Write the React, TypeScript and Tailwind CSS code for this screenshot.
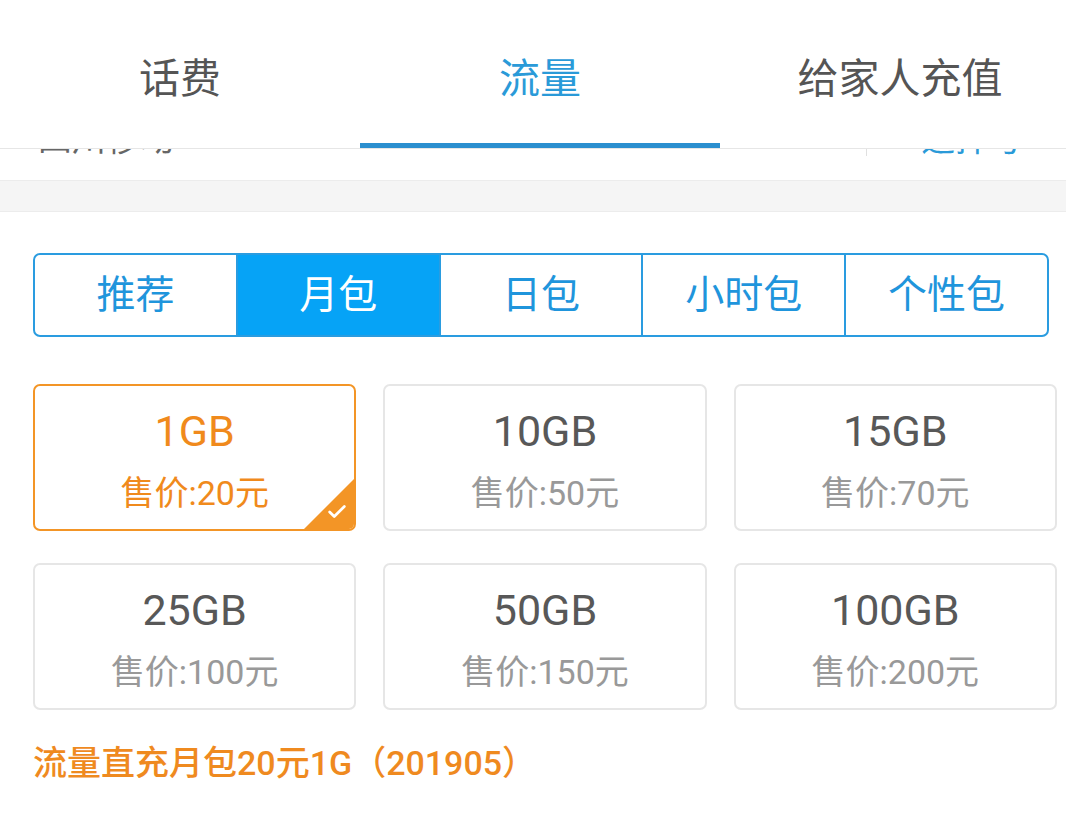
import { Check } from "lucide-react";

const font = { fontFamily: 'Roboto, "Noto Sans CJK SC", sans-serif' };

const tabs = ["话费", "流量", "给家人充值"];
const segments = ["推荐", "月包", "日包", "小时包", "个性包"];
const plans = [
  { size: "1GB", price: "售价:20元" },
  { size: "10GB", price: "售价:50元" },
  { size: "15GB", price: "售价:70元" },
  { size: "25GB", price: "售价:100元" },
  { size: "50GB", price: "售价:150元" },
  { size: "100GB", price: "售价:200元" },
];

export default function App() {
  return (
    <div className="w-[1066px] h-[813px] overflow-hidden bg-white" style={font}>
      {/* Top tabs */}
      <div className="flex h-[149px] border-b border-[#e6e6e6]">
        {tabs.map((t, i) => (
          <div key={t} className="relative w-[360px] shrink-0 flex items-center justify-center pt-[12px]">
            <span className={`text-[41px] ${i === 1 ? "text-[#2a9ad8]" : "text-[#555]"}`}>{t}</span>
            {i === 1 && <div className="absolute left-0 right-0 bottom-0 h-[5px] bg-[#2b8fcf]" />}
          </div>
        ))}
      </div>

      {/* Row hidden under the tab bar */}
      <div className="h-[31px] overflow-hidden">
        <div className="flex items-end h-[31px] -mt-[24px]">
          <div className="flex-1 pl-[38px] text-[34px] text-[#666] leading-none">四川移动</div>
          <div className="w-px h-[40px] bg-[#e0e0e0]" />
          <div className="w-[199px] pl-[54px] text-[34px] text-[#2a9ad8] leading-none">选择号</div>
        </div>
      </div>

      <div className="h-[32px] bg-[#f5f5f5] border-y border-[#ececec]" />

      {/* Segments */}
      <div className="mt-[41px] ml-[33px] w-[1016px] h-[84px] flex rounded-[7px] border-2 border-[#2a9ce0] overflow-hidden">
        {segments.map((s, i) => (
          <div
            key={s}
            className={`flex-1 flex items-center justify-center text-[39px] ${
              i > 0 ? "border-l-2 border-[#2a9ce0]" : ""
            } ${i === 1 ? "bg-[#06a3f6] text-white" : "text-[#1f95dc]"}`}
          >
            {s}
          </div>
        ))}
      </div>

      {/* Plans */}
      <div className="mt-[47px] ml-[33px] w-[1024px] grid grid-cols-3 gap-x-[27px] gap-y-[32px]">
        {plans.map((p, i) => {
          const active = i === 0;
          return (
            <div
              key={p.size}
              className={`relative h-[147px] rounded-[7px] border-2 flex flex-col items-center overflow-hidden ${
                active ? "border-[#f39526]" : "border-[#e6e6e6]"
              }`}
            >
              <div className={`mt-[20px] text-[43px] leading-[50px] ${active ? "text-[#f08a1c]" : "text-[#585858]"}`}>{p.size}</div>
              <div className={`mt-[16px] text-[34px] leading-[42px] ${active ? "text-[#f08a1c]" : "text-[#999]"}`}>{p.price}</div>
              {active && (
                <div className="absolute right-0 bottom-0 w-[50px] h-[50px]">
                  <svg width="50" height="50" viewBox="0 0 50 50" className="absolute inset-0">
                    <polygon points="50,0 50,50 0,50" fill="#f39526" />
                  </svg>
                  <Check className="absolute right-[6px] bottom-[6px] text-white" size={22} strokeWidth={3} />
                </div>
              )}
            </div>
          );
        })}
      </div>

      <div className="mt-[32px] ml-[33px] text-[34px] leading-[42px] font-medium text-[#ef8a1f]">
        流量直充月包20元1G（201905）
      </div>
    </div>
  );
}
